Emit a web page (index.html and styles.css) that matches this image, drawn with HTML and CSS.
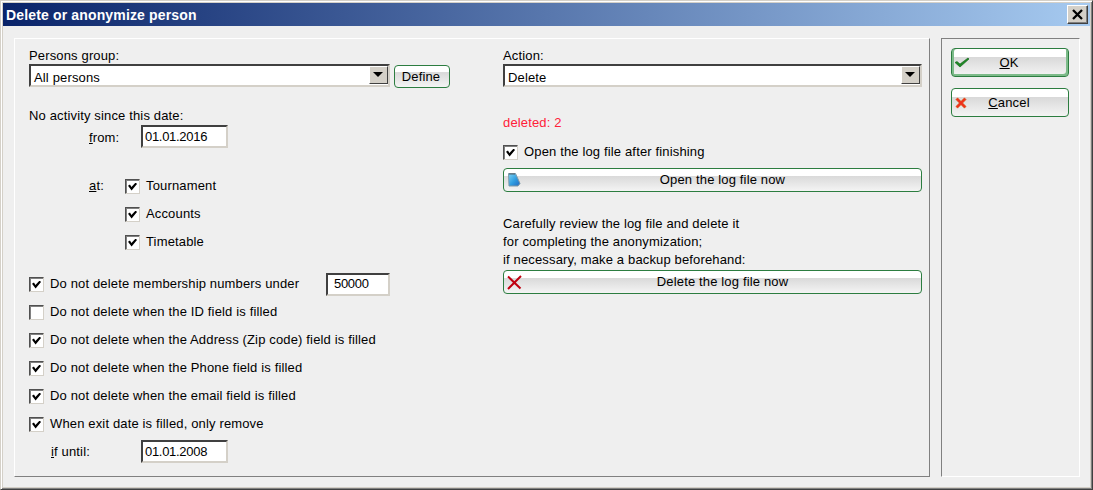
FILE: index.html
```html
<!DOCTYPE html>
<html lang="en">
<head>
<meta charset="utf-8">
<title>Delete or anonymize person</title>
<link rel="stylesheet" href="styles.css">
</head>
<body>
<div class="window">
  <div class="titlebar">
    <span class="title">Delete or anonymize person</span>
    <button class="close" type="button" aria-label="Close">
      <svg width="11" height="11" viewBox="0 0 11 11"><path d="M1 1l9 9M10 1l-9 9" fill="none" stroke="#000" stroke-width="2.300"/></svg>
    </button>
  </div>
  <div class="content">
    <div class="panel main">
      <div class="col left">
        <div class="label first">Persons group:</div>
        <div class="combo-row">
          <div class="combo wide-left"><span>All persons</span><i class="arrow"></i></div>
          <button class="btn define" type="button">Define</button>
        </div>
        <div class="label since">No activity since this date:</div>
        <div class="field-row from">
          <label class="indent"><u>f</u>rom:</label>
          <input class="edit date" value="01.01.2016" readonly>
        </div>
        <div class="at-group">
          <div class="check-row"><label class="indent at"><u>a</u>t:</label><span class="cb on"></span><span>Tournament</span></div>
          <div class="check-row sub"><span class="cb on"></span><span>Accounts</span></div>
          <div class="check-row sub"><span class="cb on"></span><span>Timetable</span></div>
        </div>
        <div class="options">
          <div class="check-row"><span class="cb on"></span><span class="opt-num">Do not delete membership numbers under</span><input class="edit number" value="50000" readonly></div>
          <div class="check-row"><span class="cb"></span><span>Do not delete when the ID field is filled</span></div>
          <div class="check-row"><span class="cb on"></span><span>Do not delete when the Address (Zip code) field is filled</span></div>
          <div class="check-row"><span class="cb on"></span><span>Do not delete when the Phone field is filled</span></div>
          <div class="check-row"><span class="cb on"></span><span>Do not delete when the email field is filled</span></div>
          <div class="check-row"><span class="cb on"></span><span>When exit date is filled, only remove</span></div>
          <div class="field-row until">
            <label class="indent-if"><u>i</u>f until:</label>
            <input class="edit date" value="01.01.2008" readonly>
          </div>
        </div>
      </div>
      <div class="col right">
        <div class="label first">Action:</div>
        <div class="combo"><span>Delete</span><i class="arrow"></i></div>
        <div class="deleted">deleted: 2</div>
        <div class="check-row after"><span class="cb on"></span><span>Open the log file after finishing</span></div>
        <button class="btn wide" type="button">
          <svg class="ico" width="18" height="18" viewBox="0 0 18 18">
            <defs><linearGradient id="doc" x1="0" y1="0" x2="1" y2="1"><stop offset="0" stop-color="#7fd4f4"/><stop offset=".55" stop-color="#2e9ce0"/><stop offset="1" stop-color="#2468c0"/></linearGradient></defs>
            <path d="M1.500 2.500h7l4.500 10-2 2.500h-9z" fill="url(#doc)" stroke="#7f9aa8"/>
            <path d="M3 2v2M5 2v2M7 2v2" stroke="#50606a"/>
          </svg>
          Open the log file now
        </button>
        <p class="note">Carefully review the log file and delete it<br>for completing the anonymization;<br>if necessary, make a backup beforehand:</p>
        <button class="btn wide" type="button">
          <svg class="ico" width="18" height="18" viewBox="0 0 18 18"><path d="M1 3.500l12.500 12M14 3 1 16" fill="none" stroke="#c00010" stroke-width="2"/></svg>
          Delete the log file now
        </button>
      </div>
    </div>
    <div class="panel side">
      <button class="btn action default" type="button">
        <svg class="ico" width="16" height="14" viewBox="0 0 16 14"><path d="M1 6.500l2-1 3 2.500 8-6 1 1-9 8z" fill="#1e8a24" stroke="#0c5c14" stroke-width=".6"/></svg>
        <span><u>O</u>K</span>
      </button>
      <button class="btn action" type="button">
        <svg class="ico small" width="12" height="12" viewBox="0 0 14 14"><path d="M1 3l2-2 4 4 4-4 2 2-4 4 4 4-2 2-4-4-4 4-2-2 4-4z" fill="#f0301c" stroke="#d86a20" stroke-width=".7"/></svg>
        <span><u>C</u>ancel</span>
      </button>
    </div>
  </div>
</div>
</body>
</html>
```
FILE: styles.css
```css
* { box-sizing: border-box; }
html, body { margin: 0; padding: 0; }
body {
  width: 1093px;
  height: 490px;
  overflow: hidden;
  font: 13px/18px "Liberation Sans", Arial, sans-serif;
  letter-spacing: .15px;
  color: #000;
}
.window {
  width: 1093px;
  height: 490px;
  padding: 2px;
  background: #d4d0c8;
  border-style: solid;
  border-width: 1px;
  border-color: #d4d0c8 #404040 #404040 #d4d0c8;
  box-shadow: inset 1px 1px 0 #fff, inset -1px -1px 0 #808080;
  display: flex;
  flex-direction: column;
}
.titlebar {
  height: 23px;
  flex: none;
  display: flex;
  align-items: center;
  justify-content: space-between;
  padding: 0 2px 0 3px;
  background: linear-gradient(90deg, #0a246a, #a6caf0);
}
.title { color: #fff; font-weight: 700; font-size: 14px; }
.close {
  width: 21px;
  height: 19px;
  padding: 0;
  display: flex;
  align-items: center;
  justify-content: center;
  background: #d4d0c8;
  border: 1px solid;
  border-color: #fff #404040 #404040 #fff;
  box-shadow: inset -1px -1px 0 #808080;
}
.content {
  flex: 1;
  display: flex;
  align-items: stretch;
  gap: 11px;
  padding: 12px 10px 10px 11px;
  background: #efefef;
}
.panel { border: 1px solid; }
.main {
  width: 916px;
  display: flex;
  padding: 0 0 0 14px;
  border-color: #fff #808080 #808080 #fff;
}
.side {
  width: 139px;
  display: flex;
  flex-direction: column;
  gap: 11px;
  padding: 9px 9px 0 9px;
  border-color: #808080 #fff #fff #808080;
}
.col { display: flex; flex-direction: column; }
.left { width: 474px; }
.right { width: 419px; }
.label.first { margin-top: 8px; height: 16px; }
.combo-row { display: flex; gap: 4px; align-items: flex-start; }
.combo {
  height: 23px;
  width: 419px;
  margin-top: 1px;
  padding: 0 0 0 3px;
  display: flex;
  align-items: center;
  justify-content: space-between;
  background: #fff;
  border: 2px solid;
  border-color: #404040 #d4d0c8 #d4d0c8 #404040;
}
.combo span { padding-top: 5px; }
.combo.wide-left { width: 361px; }
.arrow {
  width: 19px;
  height: 18px;
  flex: none;
  margin-bottom: 1px;
  position: relative;
  background: #d4d0c8;
  border: 1px solid;
  border-color: #fff #404040 #404040 #fff;
}
.arrow::after {
  content: "";
  position: absolute;
  left: 3px;
  top: 5px;
  border-style: solid;
  border-width: 5px 5px 0;
  border-color: #000 transparent transparent;
}
.btn {
  font: inherit;
  letter-spacing: inherit;
  color: #000;
  padding: 0;
  border: 1px solid #2c7d40;
  border-radius: 4px;
  background: linear-gradient(180deg, #fff 0, #fff 30%, #d9d9d9 31%, #f4f4f4 100%);
  position: relative;
}
.define { width: 56px; height: 23px; margin-top: 2px; padding-right: 2px; }
.since { margin-top: 19px; height: 18px; }
.field-row { display: flex; align-items: center; }
.from { height: 23px; }
.from label { padding-top: 2px; }
.indent { width: 52px; margin-left: 60px; }
.indent.at { width: 37px; margin-right: -1px; }
.indent-if { width: 90px; margin-left: 22px; }
.edit {
  font: inherit;
  letter-spacing: -.3px;
  color: #000;
  height: 23px;
  padding: 0 0 1px 2px;
  background: #fff;
  border: 2px solid;
  border-color: #404040 #d4d0c8 #d4d0c8 #404040;
  outline: none;
}
.date { width: 87px; }
.number { width: 64px; padding-left: 6px; flex: none; }
.at-group { margin-top: 24px; display: flex; flex-direction: column; }
.check-row { height: 28px; display: flex; align-items: center; flex: none; }
.check-row.sub { padding-left: 96px; }
.cb {
  width: 15px;
  height: 15px;
  flex: none;
  margin-right: 6px;
  background: #fff;
  position: relative;
  border: 1px solid;
  border-color: #505050 #d4d0c8 #d4d0c8 #505050;
  box-shadow: inset 1px 1px 0 #808080;
}
.cb.on::after {
  content: "";
  position: absolute;
  left: 2px;
  top: 3px;
  width: 9px;
  height: 8px;
  background: #000;
  clip-path: polygon(0 40%, 22% 25%, 38% 55%, 85% 0, 100% 18%, 40% 100%);
}
.options { margin-top: 14px; display: flex; flex-direction: column; }
.opt-num { width: 276px; }
.until { height: 23px; margin-top: 2px; }
.deleted { color: #ff2038; margin-top: 27px; height: 18px; }
.after { margin-top: 6px; height: 28px; }
.wide { width: 419px; height: 24px; margin-top: 2px; flex: none; padding-left: 20px; }
.ico { position: absolute; left: 3px; top: 2px; }
.note { margin: 23px 0 0; line-height: 18px; height: 54px; }
.note + .wide { margin-top: 1px; }
.action { width: 118px; height: 29px; flex: none; padding-right: 2px; }
.action .ico { top: 7px; left: 2px; }
.action .ico.small { top: 8px; left: 3px; }
.default { box-shadow: inset 2px 0 0 #7dbb8a, inset -2px -2px 0 #7dbb8a; }
```
